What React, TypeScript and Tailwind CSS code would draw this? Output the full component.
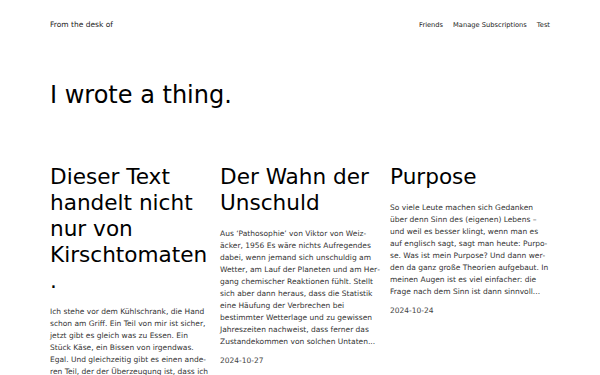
const posts = [
  {
    title: "Dieser Text handelt nicht nur von Kirschtomaten.",
    excerpt:
      "Ich stehe vor dem Kühlschrank, die Hand schon am Griff. Ein Teil von mir ist sicher, jetzt gibt es gleich was zu Essen. Ein Stück Käse, ein Bissen von irgendwas. Egal. Und gleichzeitig gibt es einen ande\u00adren Teil, der der Überzeugung ist, dass ich eigentlich gar keinen Hunger habe...",
    date: "2024-10-29",
  },
  {
    title: "Der Wahn der Unschuld",
    excerpt:
      "Aus ‘Pathosophie’ von Viktor von Weiz\u00adäcker, 1956 Es wäre nichts Aufregendes dabei, wenn jemand sich unschuldig am Wetter, am Lauf der Planeten und am Her\u00adgang chemischer Reaktionen fühlt. Stellt sich aber dann heraus, dass die Statistik eine Häufung der Verbrechen bei bestimmter Wetterlage und zu gewissen Jahreszeiten nachweist, dass ferner das Zustandekommen von solchen Untaten...",
    date: "2024-10-27",
  },
  {
    title: "Purpose",
    excerpt:
      "So viele Leute machen sich Gedanken über denn Sinn des (eigenen) Lebens – und weil es besser klingt, wenn man es auf englisch sagt, sagt man heute: Purpo\u00adse. Was ist mein Purpose? Und dann wer\u00adden da ganz große Theorien aufgebaut. In meinen Augen ist es viel einfacher: die Frage nach dem Sinn ist dann sinnvoll...",
    date: "2024-10-24",
  },
]

function PostCard({ title, excerpt, date }: { title: string; excerpt: string; date: string }) {
  return (
    <article className="min-w-0">
      <h2 className="text-[21.6px] leading-[26px] text-black break-words">{title}</h2>
      <p className="mt-[12px] text-[7.5px] leading-[12px] text-[#333]">{excerpt}</p>
      <div className="mt-[8px] text-[7.5px] leading-[10px] text-[#444]">{date}</div>
    </article>
  )
}

export default function App() {
  return (
    <div lang="de" className="min-h-screen bg-white px-[50px] font-['DejaVu_Sans',sans-serif] hyphens-auto">
      <header className="pt-[20px] flex items-center justify-between text-[#222]">
        <a href="#" className="text-[7.5px] leading-[10px]">From the desk of</a>
        <nav className="flex gap-[10px] text-[6.7px] leading-[10px]">
          <a href="#">Friends</a>
          <a href="#">Manage Subscriptions</a>
          <a href="#">Test</a>
        </nav>
      </header>
      <h1 className="mt-[50px] text-[24px] leading-[30px] text-black">I wrote a thing.</h1>
      <main className="mt-[54px] grid grid-cols-3 gap-[10px] pb-10">
        {posts.map((p) => (
          <PostCard key={p.title} {...p} />
        ))}
      </main>
    </div>
  )
}
